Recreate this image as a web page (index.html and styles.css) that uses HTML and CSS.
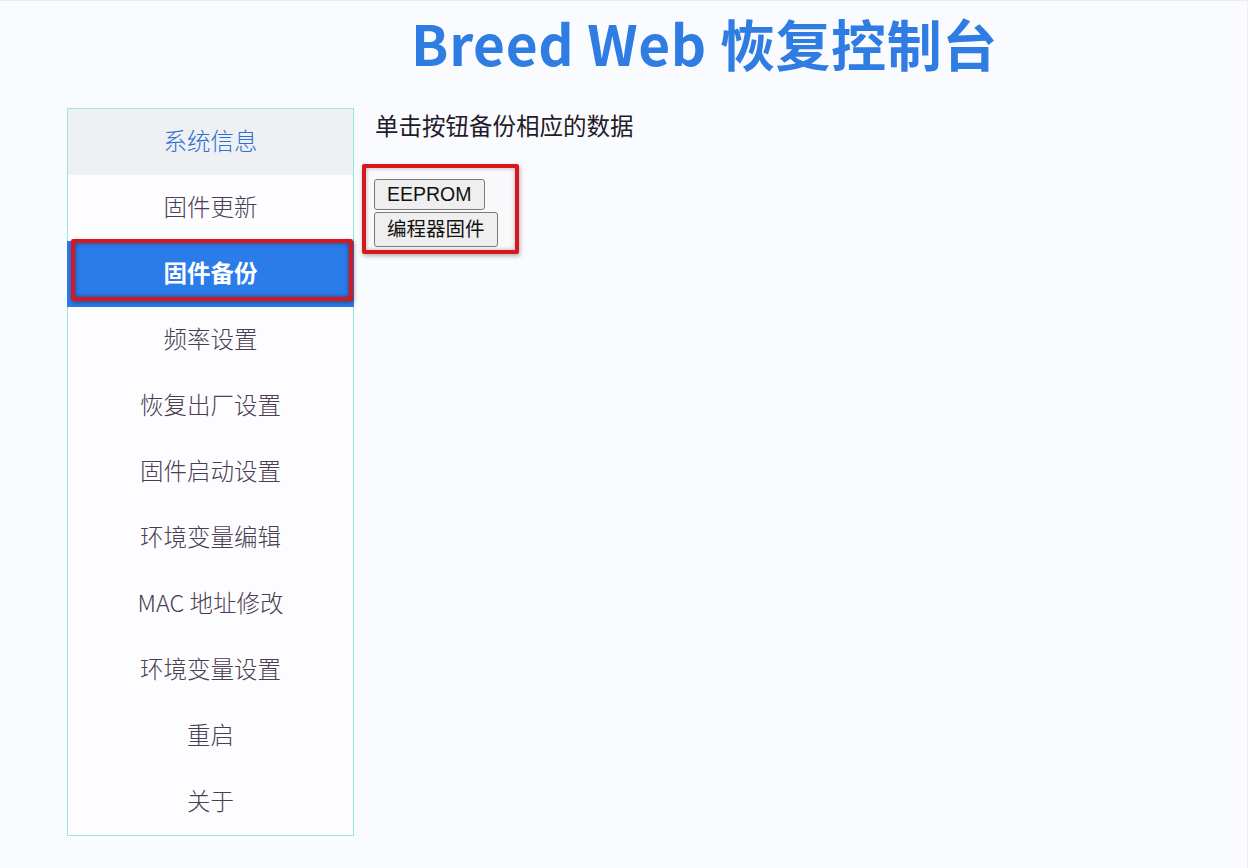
FILE: index.html
```html
<!DOCTYPE html>
<html lang="zh-CN">
<head>
<meta charset="utf-8">
<title>Breed Web 恢复控制台</title>
<link rel="stylesheet" href="styles.css">
</head>
<body>
<div class="page">
  <header class="header">
    <h1 class="title">Breed Web 恢复控制台</h1>
  </header>
  <div class="layout">
    <nav class="sidebar">
      <a class="nav-item nav-first">系统信息</a>
      <a class="nav-item">固件更新</a>
      <a class="nav-item nav-active">固件备份</a>
      <a class="nav-item">频率设置</a>
      <a class="nav-item">恢复出厂设置</a>
      <a class="nav-item">固件启动设置</a>
      <a class="nav-item">环境变量编辑</a>
      <a class="nav-item">MAC 地址修改</a>
      <a class="nav-item">环境变量设置</a>
      <a class="nav-item">重启</a>
      <a class="nav-item">关于</a>
    </nav>
    <main class="main">
      <p class="intro">单击按钮备份相应的数据</p>
      <div class="btn-group">
        <button class="btn">EEPROM</button>
        <button class="btn btn-cjk">编程器固件</button>
      </div>
    </main>
  </div>
</div>
</body>
</html>
```

FILE: styles.css
```css
html, body {
  margin: 0;
  padding: 0;
}

body {
  background: #fafbfe;
  font-family: "Noto Sans CJK SC", "Noto Sans", sans-serif;
  color: #3a3040;
}

.page {
  width: 1248px;
  height: 868px;
  box-sizing: border-box;
  border-top: 1px solid #ececec;
  border-right: 1px solid #f0f0f0;
  overflow: hidden;
}

.header {
  padding: 9px 0 0 162px;
  height: 98px;
  box-sizing: border-box;
  text-align: center;
}

.title {
  margin: 0;
  font-size: 55px;
  line-height: 64px;
  font-weight: 700;
  color: #2f7ce3;
  letter-spacing: 0.6px;
}

.layout {
  display: flex;
  align-items: flex-start;
  padding-left: 67px;
  padding-top: 9px;
}

.sidebar {
  width: 287px;
  box-sizing: border-box;
  border: 1px solid #98e6e2;
  background: #fdfdff;
  display: flex;
  flex-direction: column;
}

.nav-item {
  display: block;
  height: 66px;
  line-height: 62px;
  text-align: center;
  font-size: 23.5px;
  font-weight: 300;
  color: #4a3e52;
  text-decoration: none;
}

.nav-first {
  background: #eff0f3;
  color: #2f6fd2;
}

.nav-active {
  position: relative;
  background: #2b7ce8;
  color: #ffffff;
  font-weight: 700;
  margin: 0 -1px;
}

.nav-active::after {
  content: "";
  position: absolute;
  left: 4px;
  top: -2px;
  width: 282px;
  height: 62px;
  box-sizing: border-box;
  border: 4px solid #d8161c;
  border-radius: 2px;
  box-shadow: inset 0 0 5px rgba(0, 20, 80, 0.55), 1px 2px 4px rgba(0, 0, 0, 0.35);
}

.main {
  padding-left: 21px;
  padding-top: 2px;
}

.intro {
  margin: 0;
  font-size: 23.5px;
  line-height: 30px;
  color: #231a2a;
}

.btn-group {
  display: inline-flex;
  flex-direction: column;
  align-items: flex-start;
  gap: 2px;
  margin-top: 24px;
  margin-left: -13px;
  padding: 11px 17px 3px 8px;
  border: 4px solid #d8161c;
  border-radius: 2px;
  background: #f9f9fb;
  box-shadow: inset 0 0 4px rgba(0, 0, 0, 0.3), 1px 2px 4px rgba(0, 0, 0, 0.3);
}

.btn {
  font-family: "Liberation Sans", "Noto Sans CJK SC", sans-serif;
  font-size: 19.5px;
  line-height: 27px;
  color: #111;
  background: #efefef;
  border: 1px solid #7a7a7a;
  border-radius: 3px;
  padding: 1px 12px;
}

.btn-cjk {
  padding: 3px 12px;
}
```
